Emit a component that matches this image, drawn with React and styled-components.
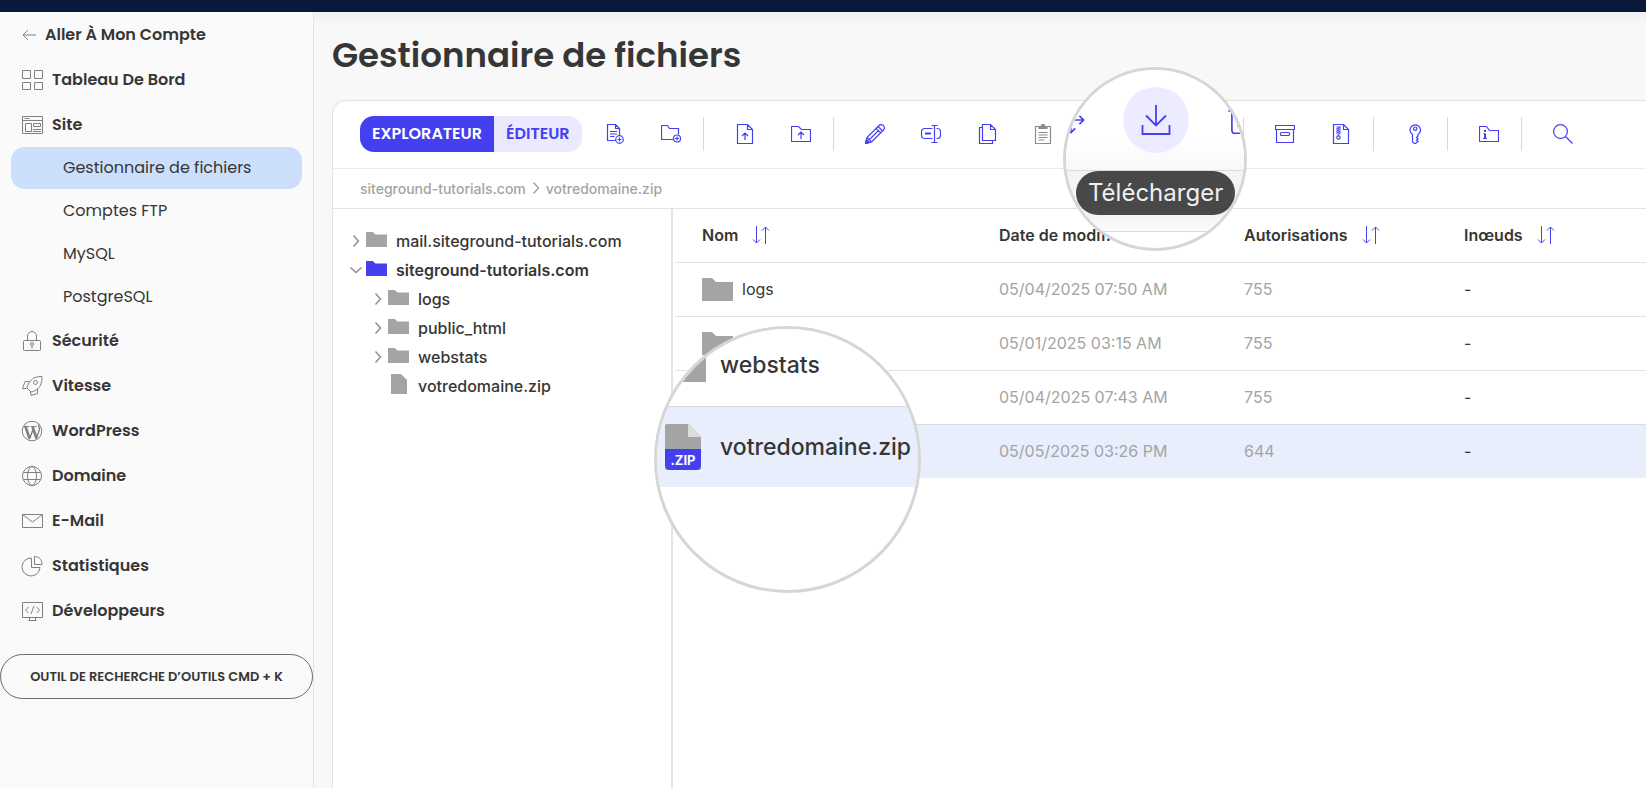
import React from 'react';
import styled, { createGlobalStyle, css } from 'styled-components';

const accent = '#4440f0';
const display = "Poppins, Inter, 'Open Sans', sans-serif";

const GlobalStyle = createGlobalStyle`
  *, *::before, *::after {
    box-sizing: border-box;
  }

  body {
    margin: 0;
    overflow-x: hidden;
    background: #f8f8f8;
    color: #363636;
    font-family: Inter, 'Open Sans', sans-serif;
    font-size: 16px;
  }

  button {
    border: none;
    background: none;
    padding: 0;
    color: inherit;
    font: inherit;
    cursor: pointer;
  }
`;

/* Sidebar icons, 22 x 22 */

const NavSvg = ({ children }) => (
  <svg width="22" height="22" viewBox="0 0 22 22" fill="none" stroke="currentColor" aria-hidden="true">
    {children}
  </svg>
);

const BackIcon = () => (
  <svg width="14" height="12" viewBox="0 0 14 12" fill="none" stroke="currentColor" aria-hidden="true">
    <path d="M14 6H1M6 1 1 6l5 5" />
  </svg>
);

const DashboardIcon = () => (
  <NavSvg>
    <path d="M1.5 1.5h8v8h-8zM13.5 1.5h8v8h-8zM1.5 13.5h8v7h-8zM13.5 13.5h8v7h-8z" />
  </NavSvg>
);

const SiteIcon = () => (
  <NavSvg>
    <path d="M1.5 2.5h20v17h-20zM1.5 6.5h20M3.5 4.5h5M4.5 9.5h6v8h-6zM12.5 9.5h7v3h-7zM12 15.5h8M12 17.5h8" />
  </NavSvg>
);

const LockIcon = () => (
  <NavSvg>
    <rect x="2.5" y="10.5" width="17" height="10" rx="1" />
    <path d="M6.5 10.5V6a4.5 4.5 0 0 1 9 0v4.5" />
    <circle cx="11" cy="14" r="1.5" />
    <path d="M11 15.5v3" />
  </NavSvg>
);

const RocketIcon = () => (
  <NavSvg>
    <path d="M21 1.500c-5.500 0-9 1.300-12 5-1.600 2-2.500 4-3 6.500l4 4c2.500-.5 4.500-1.400 6.500-3 3.500-3 4.500-7.500 4.500-12.500z" />
    <circle cx="14.500" cy="7.500" r="2" />
    <path d="M8.500 6.500H4L1.500 13.500h4M16.500 14v4.500l-6.500 2-.5-3.500" />
  </NavSvg>
);

const WordPressIcon = () => (
  <NavSvg>
    <circle cx="11" cy="11" r="9.800" />
    <path d="M2.500 6.500h6M10 6.500h5.500" />
    <path d="m4.500 6.500 4 12M11.500 6.500l4 12" strokeWidth="2.600" />
    <path d="m8.500 19 3.500-9.500M15 19l3.500-9.500c.7-2-1.500-2.500-1-5" strokeWidth="1.400" />
  </NavSvg>
);

const GlobeIcon = () => (
  <NavSvg>
    <circle cx="11" cy="11" r="9.500" />
    <ellipse cx="11" cy="11" rx="4.500" ry="9.500" />
    <path d="M2.500 7.500h17M2.500 14.500h17" />
  </NavSvg>
);

const MailIcon = () => (
  <NavSvg>
    <path d="M1.500 4.500h20v13h-20zM1.500 4.500l10 7.500 10-7.500" />
  </NavSvg>
);

const PieIcon = () => (
  <NavSvg>
    <path d="M10.500 3A9 9 0 1 0 19 12.500h-8.500z" />
    <path d="M13.500 1.500v8h7.500c0-5-3-8-7.500-8z" />
  </NavSvg>
);

const CodeIcon = () => (
  <NavSvg>
    <path d="M1.500 2.500h20v15h-20zM7.500 20.500h8M8.500 17.500v3M14.500 17.500v3M7.500 7 4.500 10l3 3M15.500 7l3 3-3 3M13 6l-3 8" />
  </NavSvg>
);

/* Toolbar icons, 20 x 20 */

const ToolSvg = ({ size = 20, children }) => (
  <svg width={size} height={size} viewBox="0 0 20 20" fill="none" stroke="currentColor" strokeWidth="1.200" aria-hidden="true">
    {children}
  </svg>
);

const NewFileIcon = () => (
  <ToolSvg>
    <path d="M10.500 16.500h-8V.5h8l4 4v6.500M10.500.5v4h4M5 7.500h7M5 10h7M5 12.500h4.500" />
    <circle cx="14.500" cy="15.500" r="3.800" />
    <path d="M14.500 13.500v4M12.500 15.500h4" />
  </ToolSvg>
);

const NewFolderIcon = () => (
  <ToolSvg>
    <path d="M12 15.500H.5v-14h6l2 3h9v6" />
    <circle cx="16" cy="14.500" r="3.500" />
    <path d="M16 12.500v4M14 14.500h4" />
  </ToolSvg>
);

const UploadFileIcon = () => (
  <ToolSvg>
    <path d="M2.500.5h10l5 5v14h-15zM12.500.5v5h5M10 16V9M7 12l3-3 3 3" />
  </ToolSvg>
);

const UploadFolderIcon = () => (
  <ToolSvg>
    <path d="M.5 2.500h7l3 3h9v12H.5zM10 15V8M7 11l3-3 3 3" />
  </ToolSvg>
);

const PencilIcon = () => (
  <ToolSvg>
    <path d="M.5 19.500 2 13.500 14 1.500c1.500-1.500 3-1 4.500 0 1 1.500 1.500 3 0 4.500L6.500 18zM2 13.500l4.500 4.500M4.500 15.500l9-9M11 4.500l5 4.500M13 2.500l4.800 4.500" />
    <path d="m.5 19.500 1-4 3 3z" fill="currentColor" />
  </ToolSvg>
);

const RenameIcon = () => (
  <ToolSvg>
    <path d="M11.500 4.500h-8a3 3 0 0 0-3 3v4a3 3 0 0 0 3 3h8M15.500 4.500h1a3 3 0 0 1 3 3v4a3 3 0 0 1-3 3h-1M13.500 1.500v17M10.500 1.500h6M10.500 18.500h6" />
    <path d="M4 9.500h6" strokeWidth="2" />
  </ToolSvg>
);

const CopyIcon = () => (
  <ToolSvg>
    <path d="M5.500.5h8l5 5v11h-13zM13.500.5v5h5M5.500 3.500h-3v16h13v-3" />
  </ToolSvg>
);

const PasteIcon = () => (
  <ToolSvg>
    <path d="M2.500 2.500h15v17h-15zM5.500 8.500h9M5.500 11h9M5.500 13.500h9M5.500 16h6" />
    <path d="M6 2.500h2l1-2h2l1 2h2v2H6z" fill="currentColor" />
  </ToolSvg>
);

const MoveIcon = ({ size }) => (
  <ToolSvg size={size}>
    <path d="M10 1v6.500M10 12v7M1 10h6.500M12 10h7M7 4l3-3 3 3M7 16l3 3 3-3M4 7l-3 3 3 3M16 7l3 3-3 3" />
  </ToolSvg>
);

const DownloadIcon = ({ size = 20 }) => (
  <svg width={size} height={size} viewBox="0 0 30 30" fill="none" stroke="currentColor" strokeWidth="1.800" aria-hidden="true">
    <path d="M15 0v20M5 10.500 15 20.500l10-10M1.500 20v9h27v-9" />
  </svg>
);

const TrashIcon = ({ size }) => (
  <ToolSvg size={size}>
    <path d="M1 3.500h18M7 3.500v-3h6v3M3.500 3.500v14q0 2 2 2h9q2 0 2-2v-14M8 8v7M12 8v7" />
  </ToolSvg>
);

const ArchiveIcon = () => (
  <ToolSvg>
    <path d="M.5 1.500h19v4H.5zM1.500 5.500h17v13h-17z" />
    <rect x="5.500" y="8.500" width="9" height="3" rx="1" />
  </ToolSvg>
);

const ZipIcon = () => (
  <ToolSvg>
    <path d="M2.500.5h10l5 5v14h-15zM12.500.5v5h5" />
    <path d="M5.500 3h4l-4 2h4l-4 2h4l-4 2h4l-3 2.500" strokeWidth="1" />
    <circle cx="7.500" cy="13.500" r="1.700" />
  </ToolSvg>
);

const KeyIcon = () => (
  <ToolSvg>
    <path d="M7.500 10.500a5.200 5.200 0 1 1 5.500 0v1.500l-1.500 1.500 1.500 1.500-1.500 1.500 1.500 1-2.500 2h-1L7.500 18z" />
    <circle cx="10.200" cy="4.700" r="1.700" />
  </ToolSvg>
);

const InfoFolderIcon = () => (
  <ToolSvg>
    <path d="M.5 2.500h7l3 4h9v11H.5z" />
    <path d="M6 6v2M6 9.500V15" strokeWidth="2" />
    <path d="M4.500 9.500H6M4 14.500h4" />
  </ToolSvg>
);

const SearchIcon = () => (
  <ToolSvg>
    <circle cx="7.500" cy="7.500" r="6.900" />
    <path d="m12.500 12.500 7 7" />
  </ToolSvg>
);

const SortIcon = () => (
  <svg width="18" height="20" viewBox="0 0 18 20" fill="none" stroke={accent} aria-hidden="true">
    <path d="M4.500 1v17M1 14.500l3.500 3.500L8 14.500M13.500 19V2M10 5.500 13.500 2 17 5.500" />
  </svg>
);

const ChevronIcon = ({ open }) => (
  <svg width="12" height="12" viewBox="0 0 12 12" fill="none" stroke="currentColor" strokeWidth="1.400" aria-hidden="true">
    <path d={open ? 'M.5 3.500 6 8.500l5.500-5' : 'M3.500.5 8.500 6l-5 5.500'} />
  </svg>
);

const FolderShape = ({ width, height, color = '#a4a4a4' }) => (
  <svg width={width} height={height} viewBox="0 0 31 23" preserveAspectRatio="none" fill={color} aria-hidden="true">
    <path d="M0 0h10l4 4h17v19H0z" />
  </svg>
);

const FileShape = () => (
  <svg width="16" height="20" viewBox="0 0 16 20" fill="#a4a4a4" aria-hidden="true">
    <path d="M0 0h10l6 6v14H0z" />
  </svg>
);

const ZipFileIcon = () => (
  <ZipBadge>
    <svg width="36" height="46" viewBox="0 0 36 46" aria-hidden="true">
      <path d="M2 0h21l13 13v31q0 2-2 2H2q-2 0-2-2V2q0-2 2-2z" fill="#a4a4a4" />
      <path d="M23 0v13h13z" fill="#dcdcdc" />
      <path d="M0 25h36v16q0 5-5 5H5q-5 0-5-5z" fill={accent} />
    </svg>
    <span>.ZIP</span>
  </ZipBadge>
);

const siteLinks = ['Gestionnaire de fichiers', 'Comptes FTP', 'MySQL', 'PostgreSQL'];

const sections = [
  { label: 'Sécurité', icon: <LockIcon /> },
  { label: 'Vitesse', icon: <RocketIcon /> },
  { label: 'WordPress', icon: <WordPressIcon /> },
  { label: 'Domaine', icon: <GlobeIcon /> },
  { label: 'E-Mail', icon: <MailIcon /> },
  { label: 'Statistiques', icon: <PieIcon /> },
  { label: 'Développeurs', icon: <CodeIcon /> },
];

const toolGroups = [
  [
    { label: 'Nouveau fichier', icon: <NewFileIcon /> },
    { label: 'Nouveau dossier', icon: <NewFolderIcon /> },
  ],
  [
    { label: 'Importer un fichier', icon: <UploadFileIcon /> },
    { label: 'Importer un dossier', icon: <UploadFolderIcon /> },
  ],
  [
    { label: 'Modifier', icon: <PencilIcon /> },
    { label: 'Renommer', icon: <RenameIcon /> },
    { label: 'Copier', icon: <CopyIcon /> },
    { label: 'Coller', icon: <PasteIcon />, disabled: true },
    { label: 'Déplacer', icon: <MoveIcon /> },
    { label: 'Télécharger', icon: <DownloadIcon />, magnified: true },
    { label: 'Supprimer', icon: <TrashIcon /> },
  ],
  [
    { label: 'Archiver', icon: <ArchiveIcon /> },
    { label: 'Extraire', icon: <ZipIcon /> },
  ],
  [{ label: 'Autorisations', icon: <KeyIcon /> }],
  [{ label: 'Informations', icon: <InfoFolderIcon /> }],
  [{ label: 'Rechercher', icon: <SearchIcon /> }],
];

const tree = [
  { name: 'mail.siteground-tutorials.com', level: 0 },
  { name: 'siteground-tutorials.com', level: 0, open: true },
  { name: 'logs', level: 1 },
  { name: 'public_html', level: 1 },
  { name: 'webstats', level: 1 },
  { name: 'votredomaine.zip', level: 1, file: true },
];

// the selected row is shown through the lens, which carries its name
const files = [
  { name: 'logs', date: '05/04/2025 07:50 AM', mode: '755' },
  { name: 'public_html', date: '05/01/2025 03:15 AM', mode: '755' },
  { name: 'webstats', date: '05/04/2025 07:43 AM', mode: '755' },
  { name: 'votredomaine.zip', date: '05/05/2025 03:26 PM', mode: '644', selected: true },
];

const columns = ['Nom', 'Date de modif.', 'Autorisations', 'Inœuds'];

const Sidebar = () => (
  <Aside>
    <nav>
      <BackLink href="#compte">
        <BackIcon />
        Aller À Mon Compte
      </BackLink>
      <NavLink href="#tableau">
        <DashboardIcon />
        Tableau De Bord
      </NavLink>
      <NavLink href="#site">
        <SiteIcon />
        Site
      </NavLink>
      <SubNav>
        {siteLinks.map((label, i) => (
          <SubLink key={label} href="#site" $active={i === 0}>
            {label}
          </SubLink>
        ))}
      </SubNav>
      {sections.map(({ label, icon }) => (
        <NavLink key={label} href="#section">
          {icon}
          {label}
        </NavLink>
      ))}
    </nav>
    <ToolFinder type="button">OUTIL DE RECHERCHE D’OUTILS CMD + K</ToolFinder>
  </Aside>
);

const DownloadLens = () => (
  <ToolLens>
    <LensTools>
      <MoveIcon size={28} />
      <LensCircle>
        <DownloadIcon size={30} />
      </LensCircle>
      <TrashIcon size={28} />
    </LensTools>
    <LensBar>
      <LensTooltip>Télécharger</LensTooltip>
    </LensBar>
  </ToolLens>
);

const FileLens = () => (
  <RowLens>
    <LensRow>
      <FolderShape width={46} height={34} />
      webstats
    </LensRow>
    <LensRow $selected>
      <ZipFileIcon />
      votredomaine.zip
    </LensRow>
  </RowLens>
);

const Toolbar = () => (
  <ToolbarRow>
    <Segmented>
      <Segment type="button" $active>
        EXPLORATEUR
      </Segment>
      <Segment type="button">ÉDITEUR</Segment>
    </Segmented>
    {toolGroups.map((group) => (
      <ToolGroup key={group[0].label}>
        {group.map(({ label, icon, disabled, magnified }) => (
          <ToolCell key={label}>
            <ToolButton type="button" aria-label={label} disabled={disabled}>
              {icon}
            </ToolButton>
            {magnified && <DownloadLens />}
          </ToolCell>
        ))}
      </ToolGroup>
    ))}
  </ToolbarRow>
);

const FileTree = () => (
  <TreePane>
    {tree.map(({ name, level, open, file }) => (
      <TreeRow key={name} $level={level} $open={open}>
        <Twisty>{!file && <ChevronIcon open={open} />}</Twisty>
        <TreeIcon>{file ? <FileShape /> : <FolderShape width={21} height={15} color={open ? accent : undefined} />}</TreeIcon>
        {name}
      </TreeRow>
    ))}
  </TreePane>
);

const FileTable = () => (
  <Table>
    <thead>
      <tr>
        {columns.map((column) => (
          <HeadCell key={column}>
            <SortButton type="button">
              {column}
              <SortIcon />
            </SortButton>
          </HeadCell>
        ))}
      </tr>
    </thead>
    <tbody>
      {files.map(({ name, date, mode, selected }) => (
        <FileRow key={name} $selected={selected}>
          <NameCell>
            {selected ? (
              <FileLens />
            ) : (
              <FileName>
                <FolderShape width={31} height={23} />
                {name}
              </FileName>
            )}
          </NameCell>
          <Cell>{date}</Cell>
          <Cell>{mode}</Cell>
          <Cell $dark>-</Cell>
        </FileRow>
      ))}
    </tbody>
  </Table>
);

const App = () => (
  <Page>
    <GlobalStyle />
    <TopBar />
    <Shell>
      <Sidebar />
      <Main>
        <Title>Gestionnaire de fichiers</Title>
        <Panel>
          <Toolbar />
          <Breadcrumb>
            <a href="#racine">siteground-tutorials.com</a>
            <ChevronIcon />
            <span>votredomaine.zip</span>
          </Breadcrumb>
          <Browser>
            <FileTree />
            <FileTable />
          </Browser>
        </Panel>
      </Main>
    </Shell>
  </Page>
);

const Page = styled.div`
  display: flex;
  flex-direction: column;
  min-height: 100vh;
`;

const TopBar = styled.header`
  height: 12px;
  background: #0a183b;
`;

const Shell = styled.div`
  display: flex;
  flex: 1;
`;

const Aside = styled.aside`
  flex: none;
  width: 314px;
  background: #fafafa;
  border-right: 1px solid #e4e4e4;
`;

const NavLink = styled.a`
  display: flex;
  align-items: center;
  gap: 9px;
  height: 45px;
  padding-left: 21px;
  color: #363636;
  font-family: ${display};
  font-size: 16px;
  font-weight: 600;
  text-decoration: none;

  svg {
    flex: none;
    width: 22px;
    color: #808080;
  }
`;

const BackLink = styled(NavLink)`
  padding-left: 22px;

  svg {
    width: 14px;
  }
`;

const SubNav = styled.div`
  display: flex;
  flex-direction: column;
  gap: 1px;
  padding: 0 11px;
`;

const SubLink = styled.a`
  padding-left: 52px;
  border-radius: 14px;
  background: ${(props) => (props.$active ? '#cbdffd' : 'transparent')};
  color: #363636;
  font-family: ${display};
  font-size: 16px;
  line-height: 42px;
  text-decoration: none;
`;

const ToolFinder = styled.button`
  width: 100%;
  height: 45px;
  margin-top: 21px;
  border: 1px solid #6c6c6c;
  border-radius: 23px;
  font-family: ${display};
  font-size: 13px;
  font-weight: 600;
  white-space: nowrap;
`;

const Main = styled.main`
  display: flex;
  flex: 1;
  flex-direction: column;
  min-width: 0;
  padding-left: 18px;
  background: linear-gradient(#f1f1f1, #f8f8f8 16px);
`;

const Title = styled.h1`
  margin: 0;
  padding: 20px 0 22px;
  font-family: ${display};
  font-size: 34px;
  font-weight: 600;
  line-height: 46px;
`;

const Panel = styled.section`
  display: flex;
  flex: 1;
  flex-direction: column;
  border: 1px solid #e4e4e4;
  border-width: 1px 0 0 1px;
  border-top-left-radius: 14px;
  background: #fff;
`;

const ToolbarRow = styled.div`
  display: flex;
  align-items: center;
  height: 68px;
  padding: 0 0 2px 27px;
  border-bottom: 1px solid #ebebeb;
`;

const Segmented = styled.div`
  display: flex;
  margin-right: 5px;
  border-radius: 14px;
  overflow: hidden;
`;

const Segment = styled.button`
  height: 36px;
  padding: 0 12px;
  font-family: ${display};
  font-size: 16px;
  font-weight: 600;
  ${(props) =>
    props.$active
      ? css`
          background: ${accent};
          color: #fff;
        `
      : css`
          background: #ebe9fe;
          color: ${accent};
        `}
`;

const ToolGroup = styled.div`
  display: flex;
  align-items: center;

  & + &::before {
    content: '';
    width: 1px;
    height: 34px;
    margin: 0 13px 0 4px;
    background: #d9d9d9;
  }
`;

const ToolCell = styled.div`
  position: relative;
`;

const ToolButton = styled.button`
  display: flex;
  align-items: center;
  justify-content: center;
  width: 56px;
  height: 40px;
  color: ${accent};

  &:disabled {
    color: #8d8d8d;
  }
`;

const Lens = styled.div`
  position: absolute;
  z-index: 2;
  overflow: hidden;
  border: 3px solid #d6d6d6;
  border-radius: 50%;
  background: #fff;
`;

const ToolLens = styled(Lens)`
  top: -47px;
  left: -64px;
  width: 184px;
  height: 184px;
`;

const LensTools = styled.div`
  display: flex;
  align-items: center;
  justify-content: center;
  gap: 38px;
  height: 101px;
  padding-left: 2px;
  border-bottom: 1px solid #dcdcdc;
  background: linear-gradient(#fff 70px, #f8f8f8);
  color: ${accent};

  svg {
    flex: none;
  }
`;

const LensCircle = styled.span`
  display: flex;
  align-items: center;
  justify-content: center;
  flex: none;
  width: 66px;
  height: 66px;
  border-radius: 50%;
  background: #edebff;
`;

const LensBar = styled.div`
  display: flex;
  justify-content: center;
  height: 61px;
  padding-left: 2px;
  border-bottom: 1px solid #dcdcdc;
  background: linear-gradient(#f4f4f4 44px, #fcfcfc);
`;

const LensTooltip = styled.span`
  height: 44px;
  padding: 0 12px;
  border-radius: 22px;
  background: #484848;
  color: #f0f0f0;
  font-size: 24px;
  line-height: 44px;
`;

const RowLens = styled(Lens)`
  top: -99px;
  left: -21px;
  width: 267px;
  height: 267px;
`;

const LensRow = styled.div`
  display: flex;
  align-items: center;
  gap: ${(props) => (props.$selected ? '19px' : '14px')};
  height: ${(props) => (props.$selected ? '81px' : '77px')};
  padding: ${(props) => (props.$selected ? '0 0 0 8px' : '0 0 4px 3px')};
  border-top: ${(props) => (props.$selected ? '1px solid #d4d9e6' : 'none')};
  background: ${(props) => (props.$selected ? '#e8eefc' : '#fff')};
  font-size: 23px;
  font-weight: 500;
`;

const ZipBadge = styled.span`
  display: grid;
  flex: none;
  color: #fff;
  font-size: 13px;
  font-weight: 700;

  svg,
  span {
    grid-area: 1 / 1;
  }

  span {
    align-self: end;
    justify-self: center;
    line-height: 20px;
  }
`;

const Breadcrumb = styled.nav`
  display: flex;
  align-items: center;
  gap: 4px;
  height: 40px;
  padding: 0 0 1px 27px;
  border-bottom: 1px solid #e4e4e4;
  color: #a4a4a4;
  font-size: 14px;
  font-weight: 500;

  a {
    color: inherit;
    text-decoration: none;
  }
`;

const Browser = styled.div`
  display: flex;
  flex: 1;
  align-items: stretch;
`;

const TreePane = styled.div`
  flex: none;
  width: 340px;
  padding: 17px 0 0 17px;
  border-right: 2px solid #e4e4e4;
`;

const TreeRow = styled.div`
  display: flex;
  align-items: center;
  height: 29px;
  padding-left: ${(props) => props.$level * 22}px;
  font-weight: ${(props) => (props.$open ? 600 : 500)};
`;

const Twisty = styled.span`
  display: flex;
  width: 16px;
  color: #8a8a8a;
`;

const TreeIcon = styled.span`
  display: flex;
  align-items: center;
  justify-content: center;
  width: 21px;
  height: 24px;
  margin-right: 9px;
  padding-bottom: 3px;
`;

const Table = styled.table`
  flex: 1;
  align-self: flex-start;
  min-width: 0;
  margin-left: 2px;
  table-layout: fixed;
  border-collapse: collapse;
`;

const HeadCell = styled.th`
  height: 53px;
  padding: 0;
  text-align: left;
  white-space: nowrap;

  &:nth-child(1) {
    width: 324px;
    padding-left: 27px;
  }

  &:nth-child(2) {
    width: 245px;
  }

  &:nth-child(3) {
    width: 220px;
  }
`;

const SortButton = styled.button`
  display: flex;
  align-items: center;
  gap: 14px;
  font-weight: 600;
`;

const FileRow = styled.tr`
  height: 54px;
  border-top: 1px solid ${(props) => (props.$selected ? '#d8dce6' : '#e4e4e4')};
  background: ${(props) => (props.$selected ? '#e8eefc' : 'transparent')};
`;

const Cell = styled.td`
  padding: 0;
  color: ${(props) => (props.$dark ? '#363636' : '#a4a4a4')};
`;

const NameCell = styled.td`
  position: relative;
  padding: 0 0 0 27px;
`;

const FileName = styled.span`
  display: flex;
  align-items: center;
  gap: 9px;
`;

export default App;
